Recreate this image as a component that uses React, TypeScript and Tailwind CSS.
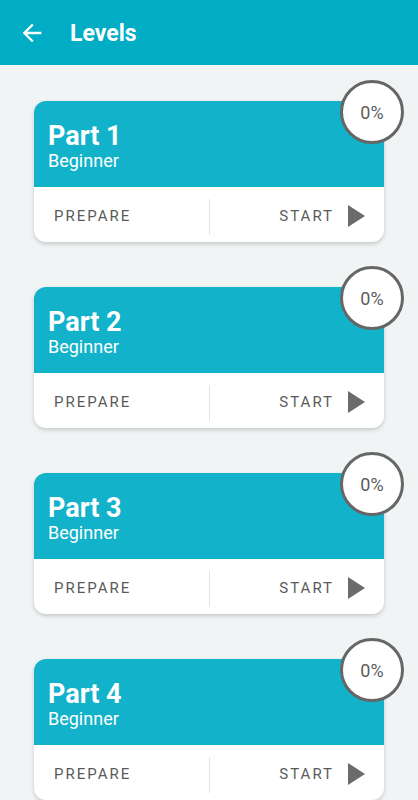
import React from 'react';

const parts = [
  { title: 'Part 1', level: 'Beginner', progress: 0 },
  { title: 'Part 2', level: 'Beginner', progress: 0 },
  { title: 'Part 3', level: 'Beginner', progress: 0 },
  { title: 'Part 4', level: 'Beginner', progress: 0 },
];

const LevelCard: React.FC<{ title: string; level: string; progress: number }> = ({ title, level, progress }) => {
  return (
    <div className="relative w-[350px] shrink-0 rounded-[12px] bg-white shadow-[0_2px_4px_rgba(0,0,0,0.18)]">
      <div className="h-[86px] rounded-t-[12px] bg-[#12b2ca] pl-[14px] pt-[20px] text-white">
        <div className="text-[27px] font-bold leading-[30px]">{title}</div>
        <div className="text-[18px] leading-[20px]">{level}</div>
      </div>
      <div className="flex h-[55px] items-center pt-[4px]">
        <div className="flex flex-1 items-center pl-[20px] text-[15px] tracking-[2px] text-[#5a5a5a]">
          PREPARE
        </div>
        <div className="h-[36px] w-px bg-[#e4e4e4]" />
        <div className="flex flex-1 items-center justify-end pr-[19px] text-[15px] tracking-[2px] text-[#5a5a5a]">
          <span>START</span>
          <svg width="17" height="22" viewBox="0 0 17 22" className="ml-[14px] -mt-[2px]">
            <path d="M0 0 L17 11 L0 22 Z" fill="#6b6b6b" />
          </svg>
        </div>
      </div>
      <div className="absolute -right-[20px] -top-[21px] flex h-[64px] w-[64px] items-center justify-center rounded-full border-[3px] border-[#666666] bg-white text-[18px] text-[#5c5c5c]">
        {progress}%
      </div>
    </div>
  );
};

export default function App() {
  return (
    <div className="min-h-[800px] bg-[#f1f4f5] font-['Roboto',sans-serif]">
      <header className="flex h-[65px] items-center bg-[#00adc4]">
        <svg width="28" height="28" viewBox="0 0 24 24" className="ml-[18px]">
          <path
            d="M20 11H7.83l5.59-5.59L12 4l-8 8 8 8 1.41-1.41L7.83 13H20v-2z"
            fill="#ffffff"
          />
        </svg>
        <h1 className="ml-[24px] pt-[3px] text-[23px] font-bold text-white">Levels</h1>
      </header>
      <main className="flex flex-col gap-[45px] pl-[34px] pt-[36px]">
        {parts.map((p) => (
          <LevelCard key={p.title} title={p.title} level={p.level} progress={p.progress} />
        ))}
      </main>
    </div>
  );
}
